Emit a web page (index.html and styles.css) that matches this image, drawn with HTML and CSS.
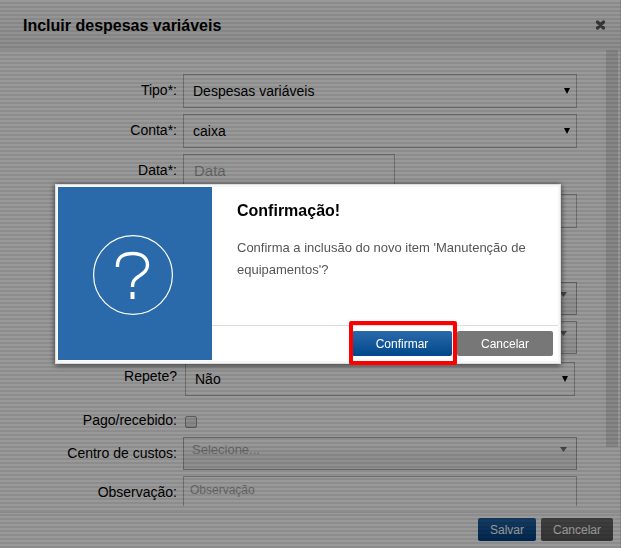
FILE: index.html
```html
<!DOCTYPE html>
<html lang="pt-BR">
<head>
<meta charset="utf-8">
<meta name="viewport" content="width=device-width, initial-scale=1">
<title>Incluir despesas variáveis</title>
<link rel="stylesheet" href="styles.css">
</head>
<body>
<main class="window">
  <header class="window-header">
    <h1>Incluir despesas variáveis</h1>
    <button class="close" type="button" aria-label="Fechar">
      <svg viewBox="0 0 11 10" width="11" height="10"><path d="M2.500 2L8.500 8M8.500 2L2.500 8"/></svg>
    </button>
  </header>
  <div class="window-body">
    <form class="form" id="form">
      <div class="row">
        <label for="tipo">Tipo*:</label>
        <div class="select"><select id="tipo"><option>Despesas variáveis</option></select><svg class="arrow" viewBox="0 0 6 6"><path d="M0 0H6L3 6Z"/></svg></div>
      </div>
      <div class="row">
        <label for="conta">Conta*:</label>
        <div class="select"><select id="conta"><option>caixa</option></select><svg class="arrow" viewBox="0 0 6 6"><path d="M0 0H6L3 6Z"/></svg></div>
      </div>
      <div class="row">
        <label for="data">Data*:</label>
        <input class="text date" id="data" type="text" placeholder="Data">
      </div>
      <div class="row spaced">
        <span></span>
        <input class="text" type="text" aria-label="Item">
      </div>
      <div class="row">
        <span></span>
        <button class="combo" type="button" aria-label="Categoria"><span></span><svg class="tri" viewBox="0 0 7 5"><path d="M0 0H7L3.500 5Z"/></svg></button>
      </div>
      <div class="row loose">
        <span></span>
        <button class="combo" type="button" aria-label="Contato"><span></span><svg class="tri" viewBox="0 0 7 5"><path d="M0 0H7L3.500 5Z"/></svg></button>
      </div>
      <div class="row repeat">
        <label for="repete">Repete?</label>
        <div class="select inset"><select id="repete"><option>Não</option></select><svg class="arrow" viewBox="0 0 6 6"><path d="M0 0H6L3 6Z"/></svg></div>
      </div>
      <div class="row check-row">
        <label for="pago">Pago/recebido:</label>
        <input class="check" id="pago" type="checkbox">
      </div>
      <div class="row">
        <label for="centro">Centro de custos:</label>
        <button class="combo" id="centro" type="button"><span>Selecione...</span><svg class="tri" viewBox="0 0 7 5"><path d="M0 0H7L3.500 5Z"/></svg></button>
      </div>
      <div class="row">
        <label for="obs">Observação:</label>
        <textarea class="notes" id="obs" placeholder="Observação"></textarea>
      </div>
    </form>
    <div class="scroll-track"><div class="scroll-thumb"></div></div>
  </div>
  <footer class="window-footer">
    <button class="btn primary" type="submit" form="form">Salvar</button>
    <button class="btn dark" type="button">Cancelar</button>
  </footer>
</main>
<div class="overlay">
  <section class="dialog" role="dialog" aria-modal="true" aria-labelledby="dialog-title">
    <div class="dialog-icon">
      <svg viewBox="0 0 80 80" width="80" height="80">
        <circle cx="40" cy="40" r="39.400"/>
        <path d="M24.500 32C24 22 30 18.500 40 18.500C49 18.500 54.500 23 54.500 30C54.500 36 50 38.500 45.500 41.500C41 44.500 39.500 46.500 39.500 52" stroke-width="3.400"/>
        <path d="M39.500 57V64" stroke-width="4"/>
      </svg>
    </div>
    <div class="dialog-main">
      <div class="dialog-text">
        <h2 id="dialog-title">Confirmação!</h2>
        <p>Confirma a inclusão do novo item 'Manutenção de equipamentos'?</p>
      </div>
      <div class="dialog-actions">
        <div class="highlight"><button class="btn primary" type="button">Confirmar</button></div>
        <button class="btn grey" type="button">Cancelar</button>
      </div>
    </div>
  </section>
</div>
</body>
</html>
```
FILE: styles.css
```css
* { box-sizing: border-box; }

body {
  margin: 0;
  font-family: "Liberation Sans", Arial, sans-serif;
  font-size: 14px;
  color: #000;
  overflow: hidden;
}

button, input, select, textarea {
  font-family: inherit;
  margin: 0;
  border-radius: 0;
}

.window {
  height: 100vh;
  display: flex;
  flex-direction: column;
  background: #fff;
  border-right: 1px solid #e4e4e4;
}

.window-header {
  flex: none;
  height: 50px;
  padding: 2px 14px 0 23px;
  display: flex;
  align-items: center;
  justify-content: space-between;
  background: linear-gradient(#fff, #ececec);
}

.window-header h1 {
  margin: 0;
  font-size: 16px;
}

.close {
  display: flex;
  padding: 0 0 2px;
  border: 0;
  background: none;
}

.close path {
  fill: none;
  stroke: #606060;
  stroke-width: 3.2;
  stroke-linecap: round;
}

.window-body {
  flex: 1;
  min-height: 0;
  display: flex;
  margin-bottom: 6px;
}

.form {
  flex: 1;
  min-width: 0;
  padding: 24px 29px 0 0;
  overflow: hidden;
}

.row {
  display: grid;
  grid-template-columns: 177px 1fr;
  column-gap: 6px;
  align-items: start;
  margin-bottom: 6px;
}

.row.spaced { margin-bottom: 54px; }
.row.loose { margin-bottom: 8px; }
.row.repeat { margin-bottom: 12px; }
.row.check-row { margin-bottom: 0; height: 29px; }

.row label {
  text-align: right;
  line-height: 32px;
}

.row.repeat label { line-height: 28px; }
.row.check-row label { line-height: 24px; }

.select {
  position: relative;
  height: 34px;
}

.select.inset { margin: 0 2px; }

.select select {
  appearance: none;
  display: block;
  width: 100%;
  height: 34px;
  padding: 0 24px 0 9px;
  font-size: 14px;
  color: #000;
  background: none;
  border: 1px solid #bbb;
}

.arrow {
  position: absolute;
  right: 7px;
  top: 14px;
  width: 6px;
  height: 6px;
}

.text {
  width: 100%;
  height: 34px;
  padding: 0 10px 2px;
  font-size: 15px;
  background: none;
  border: 1px solid #bbb;
}

.text.date { width: 212px; }

::placeholder { color: #aaa; opacity: 1; }

.combo {
  width: 100%;
  height: 33px;
  padding: 4px 9px 0 8px;
  display: flex;
  align-items: flex-start;
  justify-content: space-between;
  font-size: 13px;
  line-height: 15px;
  color: #aaa;
  background: linear-gradient(#fff 20%, #eee 60%);
  border: 1px solid #aaa;
}

.tri {
  width: 7px;
  height: 5px;
  margin-top: 5px;
  fill: #777;
}

.check {
  appearance: none;
  width: 12px;
  height: 12px;
  margin: 8px 2px 0;
  border: 1px solid #999;
  border-radius: 2px;
  background: linear-gradient(#f0f0f0, #ddd);
}

.notes {
  display: block;
  width: 100%;
  height: 60px;
  padding: 6px;
  font-size: 12px;
  background: none;
  border: 1px solid #bbb;
  resize: none;
}

.scroll-track {
  flex: none;
  width: 12px;
  margin-right: 2px;
}

.scroll-thumb {
  height: 87%;
  background: #e0e0e0;
}

.window-footer {
  flex: none;
  height: 36px;
  padding: 5px 7px 0;
  display: flex;
  justify-content: flex-end;
  align-items: flex-start;
  gap: 5px;
  border-top: 1px solid #e4e4e4;
}

.btn {
  height: 25px;
  padding: 0 12px;
  font-size: 12px;
  color: #fff;
  border: 0;
  border-radius: 2px;
}

.window-footer .btn { height: 23px; }

.primary { background: linear-gradient(#2a6aaa, #00478b); }
.dark { background: linear-gradient(#777, #555); }
.grey { background: #777; }

.window-footer .primary { background: linear-gradient(#2466a8, #004080); }
.window-footer .dark { background: linear-gradient(#6c6c6c, #585858); }

.overlay {
  position: fixed;
  inset: 0;
  padding: 0 5px 0 0;
  display: flex;
  align-items: center;
  justify-content: center;
  background: repeating-linear-gradient(rgba(0, 0, 0, .4) 0 2px, rgba(0, 0, 0, .45) 2px 4px);
}

.dialog {
  width: 506px;
  max-width: 100%;
  padding: 2px 2px 3px;
  display: flex;
  background: #fff;
  border: 1px solid #ddd;
  box-shadow: inset 0 0 0 2px #f6f6f6, 0 1px 6px rgba(0, 0, 0, .7);
}

.dialog-icon {
  flex: none;
  width: 154px;
  display: flex;
  align-items: center;
  justify-content: center;
  padding: 3px 4px 0 0;
  background: #2a6aaa;
}

.dialog-icon svg {
  fill: none;
  stroke: #fff;
  stroke-width: 1.2;
}

.dialog-main {
  flex: 1;
  display: flex;
  flex-direction: column;
}

.dialog-text {
  height: 138px;
  padding: 14px 20px 0 25px;
}

.dialog-text h2 {
  margin: 0 0 17px;
  font-size: 16px;
  line-height: 19px;
}

.dialog-text p {
  margin: 0;
  font-size: 13px;
  line-height: 22px;
  color: #555;
}

.dialog-actions {
  height: 35px;
  padding: 5px 5px 0 0;
  display: flex;
  justify-content: flex-end;
  align-items: flex-start;
  gap: 5px;
  border-top: 1px solid #ddd;
}

.dialog-actions .grey { width: 96px; }
.dialog-actions .primary { width: 100px; display: block; }

.highlight { position: relative; }

.highlight::after {
  content: "";
  position: absolute;
  inset: -10px -5px -9px -3px;
  border: 4px solid #f00;
  border-radius: 2px;
  pointer-events: none;
}
```
